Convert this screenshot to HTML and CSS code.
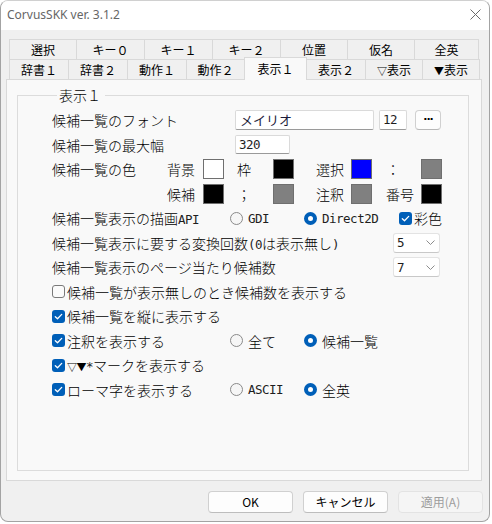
FILE: index.html
```html
<!DOCTYPE html>
<html lang="ja">
<head>
<meta charset="utf-8">
<title>CorvusSKK</title>
<link rel="stylesheet" href="styles.css">
</head>
<body>
<div class="window">
  <div class="titlebar">
    <span class="title">CorvusSKK ver. 3.1.2</span>
    <svg class="close" width="11" height="11" viewBox="0 0 11 11"><path d="M0.5 0.5 L10.5 10.5 M10.5 0.5 L0.5 10.5" stroke="#6b6b6b" stroke-width="1" fill="none"/></svg>
  </div>
  <div class="client">
    <div class="tabs">
      <div class="tabrow">
        <div class="tab w67">選択</div>
        <div class="tab w68">キー０</div>
        <div class="tab w68">キー１</div>
        <div class="tab w68">キー２</div>
        <div class="tab w67">位置</div>
        <div class="tab w67">仮名</div>
        <div class="tab w65 last">全英</div>
      </div>
      <div class="tabrow">
        <div class="tab w59">辞書１</div>
        <div class="tab w59">辞書２</div>
        <div class="tab w59">動作１</div>
        <div class="tab w58">動作２</div>
        <div class="tab w63 active">表示１</div>
        <div class="tab w59">表示２</div>
        <div class="tab w57"><span class="tri">▽</span>表示</div>
        <div class="tab w58 last"><span class="tri">▼</span>表示</div>
      </div>
    </div>
    <div class="panel">
      <fieldset class="group">
        <legend>表示１</legend>
        <div class="row">
          <span class="lab w183">候補一覧のフォント</span>
          <span class="input font-input">メイリオ</span>
          <span class="input size-input mono">12</span>
          <span class="dots">···</span>
        </div>
        <div class="row">
          <span class="lab w183">候補一覧の最大幅</span>
          <span class="input width-input mono">320</span>
        </div>
        <div class="colors">
          <span class="lab">候補一覧の色</span>
          <span class="lab">背景</span><span class="sw white"></span>
          <span class="lab">枠</span><span class="sw black"></span>
          <span class="lab">選択</span><span class="sw blue"></span>
          <span class="lab">：</span><span class="sw gray"></span>
          <span class="lab"></span>
          <span class="lab">候補</span><span class="sw black"></span>
          <span class="lab">；</span><span class="sw gray"></span>
          <span class="lab">注釈</span><span class="sw gray"></span>
          <span class="lab">番号</span><span class="sw black"></span>
        </div>
        <div class="row">
          <span class="lab w178">候補一覧表示の描画<span class="mono">API</span></span>
          <span class="opt w74"><span class="radio"></span><span class="mono">GDI</span></span>
          <span class="opt w95"><span class="radio on"></span><span class="mono">Direct2D</span></span>
          <span class="opt chk-opt"><span class="check on"><svg width="13" height="13" viewBox="0 0 13 13"><path d="M3.3 6.7 L5.5 8.8 L9.7 4.4" stroke="#fff" stroke-width="1.3" fill="none" stroke-linecap="round" stroke-linejoin="round"/></svg></span><span>彩色</span></span>
        </div>
        <div class="row">
          <span class="lab w341">候補一覧表示に要する変換回数<span class="mono">(0</span>は表示無し<span class="mono">)</span></span>
          <span class="select"><span class="mono">5</span><svg width="9" height="5" viewBox="0 0 9 5"><path d="M0.5 0.5 L4.5 4.5 L8.5 0.5" stroke="#8c8c8c" fill="none"/></svg></span>
        </div>
        <div class="row">
          <span class="lab w341">候補一覧表示のページ当たり候補数</span>
          <span class="select"><span class="mono">7</span><svg width="9" height="5" viewBox="0 0 9 5"><path d="M0.5 0.5 L4.5 4.5 L8.5 0.5" stroke="#8c8c8c" fill="none"/></svg></span>
        </div>
        <div class="row">
          <span class="opt cb"><span class="check"></span><span>候補一覧が表示無しのとき候補数を表示する</span></span>
        </div>
        <div class="row">
          <span class="opt cb"><span class="check on"><svg width="13" height="13" viewBox="0 0 13 13"><path d="M3.3 6.7 L5.5 8.8 L9.7 4.4" stroke="#fff" stroke-width="1.3" fill="none" stroke-linecap="round" stroke-linejoin="round"/></svg></span><span>候補一覧を縦に表示する</span></span>
        </div>
        <div class="row">
          <span class="opt cb w178"><span class="check on"><svg width="13" height="13" viewBox="0 0 13 13"><path d="M3.3 6.7 L5.5 8.8 L9.7 4.4" stroke="#fff" stroke-width="1.3" fill="none" stroke-linecap="round" stroke-linejoin="round"/></svg></span><span>注釈を表示する</span></span>
          <span class="opt w74"><span class="radio"></span><span>全て</span></span>
          <span class="opt"><span class="radio on"></span><span>候補一覧</span></span>
        </div>
        <div class="row">
          <span class="opt cb"><span class="check on"><svg width="13" height="13" viewBox="0 0 13 13"><path d="M3.3 6.7 L5.5 8.8 L9.7 4.4" stroke="#fff" stroke-width="1.3" fill="none" stroke-linecap="round" stroke-linejoin="round"/></svg></span><span><span class="tri2">▽▼</span><span class="mono">*</span>マークを表示する</span></span>
        </div>
        <div class="row">
          <span class="opt cb w178"><span class="check on"><svg width="13" height="13" viewBox="0 0 13 13"><path d="M3.3 6.7 L5.5 8.8 L9.7 4.4" stroke="#fff" stroke-width="1.3" fill="none" stroke-linecap="round" stroke-linejoin="round"/></svg></span><span>ローマ字を表示する</span></span>
          <span class="opt w74"><span class="radio"></span><span class="mono">ASCII</span></span>
          <span class="opt"><span class="radio on"></span><span>全英</span></span>
        </div>
      </fieldset>
    </div>
    <div class="buttons">
      <button class="btn">OK</button>
      <button class="btn">キャンセル</button>
      <button class="btn disabled">適用(A)</button>
    </div>
  </div>
</div>
</body>
</html>
```

FILE: styles.css
```css
html, body {
  margin: 0;
  padding: 0;
  background: #ffffff;
}

.window {
  width: 490px;
  height: 522px;
  box-sizing: border-box;
  border: 1px solid #a3a3a3;
  border-top-color: #d0d0d0;
  border-radius: 8px;
  overflow: hidden;
  background: #f0f0f0;
  display: flex;
  flex-direction: column;
}

.titlebar {
  height: 29px;
  box-sizing: border-box;
  background: #ffffff;
  display: flex;
  align-items: center;
  justify-content: space-between;
  padding: 0 8px 3px 6px;
}

.title {
  font-family: "Noto Sans", "Liberation Sans", sans-serif;
  font-size: 12px;
  color: #666666;
}

.close {
  display: block;
}

.client {
  flex: 1;
  display: flex;
  flex-direction: column;
  padding-top: 9px;
}

.tabs {
  margin-left: 8px;
  display: flex;
  flex-direction: column;
}

.tabrow {
  display: flex;
  align-items: flex-start;
  height: 20px;
}

.tab {
  height: 20px;
  box-sizing: border-box;
  border-top: 1px solid #d9d9d9;
  border-left: 1px solid #d9d9d9;
  background: #f0f0f0;
  font-family: "Noto Sans CJK JP", sans-serif;
  font-size: 12px;
  line-height: 19px;
  color: #000;
  text-align: center;
}

.tab.last {
  border-right: 1px solid #d9d9d9;
}

.tab.active {
  position: relative;
  z-index: 1;
  height: 23px;
  margin-top: -2px;
  margin-bottom: -1px;
  margin-right: -1px;
  border-right: 1px solid #d9d9d9;
  background: #f9f9f9;
  line-height: 21px;
}

.tri {
  font-family: "Noto Sans CJK JP", sans-serif;
  font-size: 10px;
}

.w57 { width: 57px; }
.w58 { width: 58px; }
.w59 { width: 59px; }
.w63 { width: 63px; }
.w65 { width: 65px; }
.w67 { width: 67px; }
.w68 { width: 68px; }

.panel {
  margin-left: 5px;
  width: 476px;
  height: 402px;
  box-sizing: border-box;
  border: 1px solid #d9d9d9;
  background: #f9f9f9;
  padding: 7px 12px 0 10px;
}

.group {
  margin: 0;
  height: 384px;
  box-sizing: border-box;
  border: 1px solid #dcdcdc;
  padding: 4.75px 0 0 34px;
  font-family: "Noto Sans CJK JP", sans-serif;
  font-weight: 300;
  font-size: 14px;
  color: #000;
}

.mono {
  font-family: "DejaVu Sans Mono", monospace;
  font-weight: 400;
  font-size: 12.5px;
  letter-spacing: -0.5px;
  color: #1e1e1e;
}

.group legend {
  margin-left: 5px;
  padding: 0 4px 0 2px;
  line-height: 16px;
}

.row {
  display: flex;
  align-items: center;
  height: 24.5px;
  white-space: nowrap;
}

.lab {
  display: block;
  white-space: nowrap;
}

.w178 { width: 178px; flex: none; }
.w183 { width: 183px; flex: none; }
.w341 { width: 341px; flex: none; }
.w74 { width: 74px; flex: none; }
.w95 { width: 95px; flex: none; }

.input {
  box-sizing: border-box;
  height: 20px;
  background: #ffffff;
  border: 1px solid #dadada;
  border-bottom-color: #9a9a9a;
  border-radius: 2px;
  line-height: 18px;
  padding-left: 3px;
  flex: none;
}

.font-input {
  width: 139px;
  font-family: "Noto Sans CJK JP", sans-serif;
  font-weight: 400;
  font-size: 13px;
  color: #1c1c3a;
  padding-left: 4px;
}

.size-input {
  width: 28px;
  margin-left: 5px;
}

.width-input {
  width: 55px;
  height: 19px;
  line-height: 17px;
}

.dots {
  box-sizing: border-box;
  width: 26px;
  height: 20px;
  margin-left: 8px;
  border: 1px solid #d0d0d0;
  border-bottom-color: #b8b8b8;
  border-radius: 4px;
  background: #fdfdfd;
  font-family: "DejaVu Sans", sans-serif;
  font-weight: bold;
  font-size: 11px;
  line-height: 17px;
  text-align: center;
  letter-spacing: -1px;
}

.colors {
  display: grid;
  grid-template-columns: 115px 36px 34px 36px 43px 35px 35px 35px 20px;
  grid-auto-rows: 24.5px;
  align-items: center;
}

.sw {
  display: block;
  width: 21px;
  height: 20px;
  box-sizing: border-box;
  border: 1px solid #6f6f6f;
}

.sw.white { background: #ffffff; }
.sw.black { background: #000000; }
.sw.blue { background: #0000ff; }
.sw.gray { background: #808080; }

.opt {
  display: flex;
  align-items: center;
  gap: 5px;
  white-space: nowrap;
}

.opt.cb {
  gap: 2px;
}

.opt.chk-opt {
  gap: 2px;
}

.radio {
  display: block;
  width: 13px;
  height: 13px;
  box-sizing: border-box;
  border-radius: 50%;
  border: 1px solid #8a8a8a;
  background: #f6f6f6;
  flex: none;
}

.radio.on {
  border: 4px solid #005fb8;
  background: #ffffff;
}

.check {
  display: block;
  width: 13px;
  height: 13px;
  box-sizing: border-box;
  border-radius: 3px;
  border: 1px solid #7a7a7a;
  background: #fbfbfb;
  flex: none;
}

.check.on {
  border: none;
  background: #005fb8;
}

.check svg {
  display: block;
}

.tri2 {
  font-family: "Noto Sans CJK JP", sans-serif;
  font-weight: 400;
  font-size: 10px;
  letter-spacing: -0.5px;
}

.select {
  box-sizing: border-box;
  width: 47px;
  height: 20px;
  background: #ffffff;
  border: 1px solid #e3e3e3;
  border-bottom-color: #c8c8c8;
  border-radius: 3px;
  display: flex;
  align-items: center;
  justify-content: space-between;
  padding: 0 4px 0 3px;
  flex: none;
}

.select svg {
  display: block;
}

.buttons {
  display: flex;
  justify-content: flex-end;
  gap: 10px;
  padding-right: 6px;
  margin-top: 10px;
}

.btn {
  width: 85px;
  height: 22px;
  box-sizing: border-box;
  border: 1px solid #d0d0d0;
  border-bottom-color: #bdbdbd;
  border-radius: 4px;
  background: #fdfdfd;
  font-family: "Noto Sans CJK JP", sans-serif;
  font-size: 12px;
  color: #000;
  padding: 0;
  line-height: 18px;
}

.btn.disabled {
  background: #f5f5f5;
  border-color: #e3e3e3;
  color: #9d9d9d;
}
```
